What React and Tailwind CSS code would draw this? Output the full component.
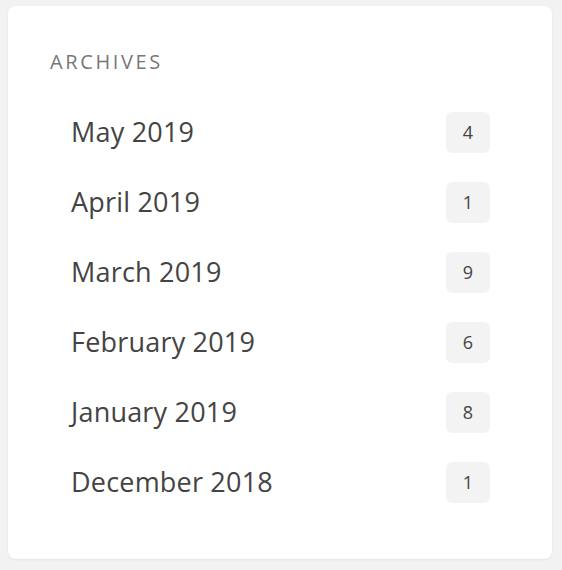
import React from "react";

const archives = [
  { label: "May 2019", count: 4 },
  { label: "April 2019", count: 1 },
  { label: "March 2019", count: 9 },
  { label: "February 2019", count: 6 },
  { label: "January 2019", count: 8 },
  { label: "December 2018", count: 1 },
];

const App = () => {
  return (
    <div
      className="min-h-[570px] w-[562px] bg-[#f2f2f2] pt-[6px] pl-[8px]"
      style={{ fontFamily: '"Open Sans", "Noto Sans", sans-serif' }}
    >
      <div className="w-[544px] h-[553px] bg-white rounded-[8px] shadow-[0_1px_3px_rgba(0,0,0,0.06)] pt-[46px] pl-[42px] pr-[62px]">
        <h3 className="text-[20px] leading-[20px] tracking-[2.6px] text-[#777] font-normal">
          ARCHIVES
        </h3>
        <ul className="mt-[25px] pl-[21px]">
          {archives.map((item) => (
            <li key={item.label} className="h-[70px] flex items-center justify-between">
              <span className="text-[27px] tracking-[0.2px] text-[#444]">{item.label}</span>
              <span className="w-[44px] h-[41px] flex items-center justify-center rounded-[6px] bg-[#f3f3f3] text-[18px] text-[#444]">
                {item.count}
              </span>
            </li>
          ))}
        </ul>
      </div>
    </div>
  );
};

export default App;
